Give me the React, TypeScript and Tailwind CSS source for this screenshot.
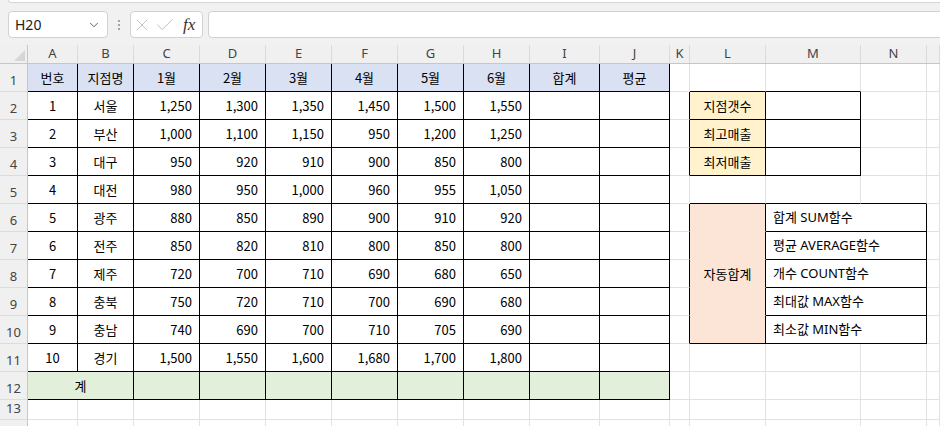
import { ChevronDown, X, Check } from "lucide-react";

const letters = ["A", "B", "C", "D", "E", "F", "G", "H", "I", "J", "K", "L", "M", "N", ""];
const widths = [
  "w-[50px]", "w-[56px]", "w-[66px]", "w-[66px]", "w-[66px]", "w-[66px]", "w-[66px]", "w-[66px]",
  "w-[70px]", "w-[70px]", "w-[20px]", "w-[76px]", "w-[95px]", "w-[66px]", "flex-1",
];

const header = ["번호", "지점명", "1월", "2월", "3월", "4월", "5월", "6월", "합계", "평균"];

const data: [string, string, string, string, string, string, string, string][] = [
  ["1", "서울", "1,250", "1,300", "1,350", "1,450", "1,500", "1,550"],
  ["2", "부산", "1,000", "1,100", "1,150", "950", "1,200", "1,250"],
  ["3", "대구", "950", "920", "910", "900", "850", "800"],
  ["4", "대전", "980", "950", "1,000", "960", "955", "1,050"],
  ["5", "광주", "880", "850", "890", "900", "910", "920"],
  ["6", "전주", "850", "820", "810", "800", "850", "800"],
  ["7", "제주", "720", "700", "710", "690", "680", "650"],
  ["8", "충북", "750", "720", "710", "700", "690", "680"],
  ["9", "충남", "740", "690", "700", "710", "705", "690"],
  ["10", "경기", "1,500", "1,550", "1,600", "1,680", "1,700", "1,800"],
];

const stats = ["지점갯수", "최고매출", "최저매출"];
const funcs = ["합계 SUM함수", "평균 AVERAGE함수", "개수 COUNT함수", "최대값 MAX함수", "최소값 MIN함수"];

type Cell = {
  ci: number;
  w: string;
  text?: string;
  align?: "c" | "r" | "l";
  bg?: string;
  latin?: boolean;
  right: string;
  bottom: string;
};

function rightBlack(r: number, ci: number) {
  if (r >= 1 && r <= 12 && ci <= 9) return true;
  const box1 = r >= 2 && r <= 4;
  const box2 = r >= 6 && r <= 10;
  if ((ci === 10 || ci === 11) && (box1 || box2)) return true;
  if (ci === 12 && box1) return true;
  if (ci === 13 && box2) return true;
  return false;
}

function bottomColor(r: number, ci: number) {
  if (ci <= 9 && r >= 1 && r <= 12) return "border-b-black";
  if ((ci === 11 || ci === 12) && r >= 1 && r <= 4) return "border-b-black";
  if (ci >= 11 && ci <= 13 && r === 5) return "border-b-black";
  if ((ci === 12 || ci === 13) && r >= 6 && r <= 10) return "border-b-black";
  if (ci === 11 && r === 10) return "border-b-black";
  if (ci === 11 && r >= 6 && r <= 9) return "border-b-[#fce4d6]";
  return "border-b-[#e1e1e1]";
}

function cellsFor(r: number): Cell[] {
  const out: Cell[] = [];
  for (let ci = 0; ci < widths.length; ci++) {
    const c: Cell = {
      ci,
      w: widths[ci],
      right: rightBlack(r, ci) ? "border-r-black" : "border-r-[#e1e1e1]",
      bottom: bottomColor(r, ci),
    };
    if (r === 1 && ci <= 9) {
      c.text = header[ci];
      c.align = "c";
      c.bg = "bg-[#d9e1f2]";
    }
    if (r >= 2 && r <= 11) {
      const row = data[r - 2];
      if (ci <= 1) {
        c.text = row[ci];
        c.align = "c";
      } else if (ci <= 7) {
        c.text = row[ci];
        c.align = "r";
      }
    }
    if (r === 12 && ci <= 9) {
      c.bg = "bg-[#e2efda]";
      if (ci === 0) {
        c.text = "계";
        c.align = "c";
        c.w = "w-[106px]";
        c.right = "border-r-black";
        ci++;
      }
    }
    if (ci === 11 && r >= 2 && r <= 4) {
      c.text = stats[r - 2];
      c.align = "c";
      c.bg = "bg-[#fff2cc]";
    }
    if (ci === 11 && r >= 6 && r <= 10) {
      c.bg = "bg-[#fce4d6]";
      if (r === 8) {
        c.text = "자동합계";
        c.align = "c";
      }
    }
    if (ci === 12 && r >= 6 && r <= 10) {
      c.text = funcs[r - 6];
      c.align = "l";
      c.latin = true;
      c.w = "w-[161px]";
      c.right = "border-r-black";
      ci++;
    }
    out.push(c);
  }
  return out;
}

function SheetRow({ r }: { r: number }) {
  const h = r <= 12 ? "h-[28px]" : "h-[20px]";
  return (
    <div className={`flex ${h}`}>
      <div className="w-[28px] shrink-0 flex items-end justify-center pb-[1px] bg-[#f0f0f0] border-r border-b border-r-[#c6c6c6] border-b-[#dcdcdc] text-[13px] text-[#444] font-['Noto_Sans',sans-serif]">
        {r <= 13 ? r : ""}
      </div>
      {cellsFor(r).map((c) => (
        <div
          key={c.ci}
          className={`${c.w} shrink-0 flex items-center border-r border-b ${c.right} ${c.bottom} ${c.bg ?? ""} ${
            c.align === "c" ? "justify-center" : c.align === "r" ? "justify-end pr-[7px]" : "justify-start pl-[7px]"
          } ${
            c.latin ? "font-['Noto_Sans','Noto_Sans_CJK_KR',sans-serif]" : ""
          } text-[13px] text-black whitespace-nowrap overflow-hidden pt-[1px]`}
        >
          {c.text}
        </div>
      ))}
    </div>
  );
}

export default function App() {
  const rows = Array.from({ length: 14 }, (_, i) => i + 1);
  return (
    <div className="w-[940px] h-[426px] overflow-hidden bg-white font-['Noto_Sans_CJK_KR',sans-serif]">
      {/* formula bar */}
      <div className="h-[45px] bg-[#f1f1f1] overflow-hidden">
        <div className="ml-[8px] -mr-[10px] h-[3px] bg-white border-x border-b border-[#d6d6d6] rounded-b-[5px]"></div>
        <div className="flex items-center mt-[8px] h-[27px]">
          <div className="ml-[8px] w-[100px] h-[27px] bg-white border border-[#d1d1d1] rounded-[4px] flex items-center justify-between pl-[6px] pr-[6px]">
            <span className="text-[14px] text-[#222] font-['Noto_Sans',sans-serif]">H20</span>
            <ChevronDown size={14} strokeWidth={1.6} className="text-[#555]" />
          </div>
          <div className="w-[22px] flex flex-col items-center gap-[2px]">
            <span className="w-[2px] h-[2px] bg-[#8a8a8a] rounded-full"></span>
            <span className="w-[2px] h-[2px] bg-[#8a8a8a] rounded-full"></span>
            <span className="w-[2px] h-[2px] bg-[#8a8a8a] rounded-full"></span>
          </div>
          <div className="w-[73px] h-[27px] bg-white border border-[#d1d1d1] rounded-[4px] flex items-center pl-[1px] gap-[2px]">
            <X size={20} strokeWidth={1} className="text-[#b8b8b8]" />
            <Check size={22} strokeWidth={1} className="text-[#b8b8b8]" />
            <span className="ml-[5px] text-[17px] italic text-[#333] font-['Liberation_Serif',serif] leading-none">fx</span>
          </div>
          <div className="ml-[5px] flex-1 -mr-[10px] h-[27px] bg-white border border-[#d1d1d1] rounded-[4px]"></div>
        </div>
      </div>

      {/* column headers */}
      <div className="flex h-[19px] bg-[#f0f0f0] border-b border-[#c6c6c6]">
        <div className="w-[28px] shrink-0 border-r border-[#c6c6c6] relative">
          <svg className="absolute right-[2px] bottom-[2px]" width="11" height="11" viewBox="0 0 11 11">
            <polygon points="11,0 11,11 0,11" fill="#d6d6d6" />
          </svg>
        </div>
        {widths.map((w, i) => (
          <div
            key={i}
            className={`${w} shrink-0 border-r border-[#dadada] flex items-center justify-center text-[13px] text-[#444] font-['Noto_Sans',sans-serif]`}
          >
            {letters[i]}
          </div>
        ))}
      </div>

      {rows.map((r) => (
        <SheetRow key={r} r={r} />
      ))}
    </div>
  );
}
